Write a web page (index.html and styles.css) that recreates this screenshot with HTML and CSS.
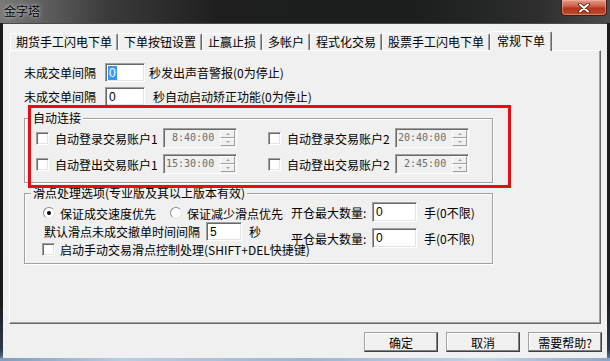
FILE: index.html
```html
<!DOCTYPE html>
<html lang="zh-CN">
<head>
<meta charset="utf-8">
<title>金字塔</title>
<link rel="stylesheet" href="styles.css">
</head>
<body>
<div class="window">
  <div class="titlebar">
    <span class="title">金字塔</span>
    <div class="close">
      <svg width="14" height="10" viewBox="0 0 14 10"><path d="M3 1.5 L11 8.5 M11 1.5 L3 8.5" stroke="#4a1a10" stroke-width="3.6" stroke-linecap="round"/><path d="M3 1.5 L11 8.5 M11 1.5 L3 8.5" stroke="#fff" stroke-width="2" stroke-linecap="round"/></svg>
    </div>
  </div>
  <div class="client">
    <div class="tabs">
      <div class="tab">期货手工闪电下单</div>
      <div class="tab">下单按钮设置</div>
      <div class="tab">止赢止损</div>
      <div class="tab">多帐户</div>
      <div class="tab">程式化交易</div>
      <div class="tab">股票手工闪电下单</div>
      <div class="tab active">常规下单</div>
    </div>
    <div class="panel">
      <div class="row r1">
        <span class="lbl">未成交单间隔</span>
        <span class="edit e1"><span class="sel">0</span></span>
        <span class="after a1">秒发出声音警报(0为停止)</span>
      </div>
      <div class="row r2">
        <span class="lbl">未成交单间隔</span>
        <span class="edit e1"><span class="val">0</span></span>
        <span class="after a2">秒自动启动矫正功能(0为停止)</span>
      </div>
      <fieldset class="group g1">
        <legend>自动连接</legend>
        <div class="conn">
          <div class="item"><span class="cb"></span><span class="clbl">自动登录交易账户1</span><div class="spin"><span class="sv"> 8:40:00</span><div class="sb"><i class="up"></i><i class="dn"></i></div></div></div>
          <div class="item"><span class="cb"></span><span class="clbl">自动登录交易账户2</span><div class="spin"><span class="sv">20:40:00</span><div class="sb"><i class="up"></i><i class="dn"></i></div></div></div>
          <div class="item"><span class="cb"></span><span class="clbl">自动登出交易账户1</span><div class="spin"><span class="sv">15:30:00</span><div class="sb"><i class="up"></i><i class="dn"></i></div></div></div>
          <div class="item"><span class="cb"></span><span class="clbl">自动登出交易账户2</span><div class="spin"><span class="sv"> 2:45:00</span><div class="sb"><i class="up"></i><i class="dn"></i></div></div></div>
        </div>
      </fieldset>
      <fieldset class="group g2">
        <legend>滑点处理选项(专业版及其以上版本有效)</legend>
        <div class="slip">
          <div class="lc">
            <div class="radios">
              <span class="radio on"></span><span class="rl">保证成交速度优先</span>
              <span class="radio r2nd"></span><span class="rl">保证减少滑点优先</span>
            </div>
            <div class="delay">
              <span class="dl">默认滑点未成交撤单时间间隔</span>
              <span class="edit e2"><span class="val">5</span></span>
              <span class="sec">秒</span>
            </div>
            <div class="manual">
              <span class="cb"></span><span class="ml">启动手动交易滑点控制处理(SHIFT+DEL快捷键)</span>
            </div>
          </div>
          <div class="rc">
            <div class="qty"><span class="ql">开仓最大数量:</span><span class="edit e3"><span class="val">0</span></span><span class="qn">手(0不限)</span></div>
            <div class="qty q2"><span class="ql">平仓最大数量:</span><span class="edit e3"><span class="val">0</span></span><span class="qn">手(0不限)</span></div>
          </div>
        </div>
      </fieldset>
      <div class="redmark"></div>
    </div>
    <div class="buttons">
      <div class="btn">确定</div>
      <div class="btn">取消</div>
      <div class="btn">需要帮助?</div>
    </div>
  </div>
  <div class="frame-bottom"></div>
</div>
</body>
</html>
```

FILE: styles.css
```css
* { box-sizing: border-box; }
html, body { margin: 0; padding: 0; }
body {
  width: 610px;
  height: 361px;
  overflow: hidden;
  background: #151515;
  font-family: "Noto Sans CJK SC", "Noto Sans", sans-serif;
  font-size: 12px;
  color: #000;
}
.window {
  width: 610px;
  height: 361px;
  display: flex;
  flex-direction: column;
  background: linear-gradient(#1c1c1c, #1a1a1a 300px, #2c3a4e 350px, #6f8cb0);
}
.titlebar {
  height: 23px;
  flex: none;
  display: flex;
  justify-content: space-between;
  align-items: flex-start;
  background: linear-gradient(90deg, #7a7a7a 0, #606060 40px, #3a3a3a 110px, #1e1e1e 220px, #1b1f1e 420px, #2e2e2e 540px, #4c4c4c 610px);
}
.title {
  margin: 2px 0 0 4px;
  line-height: 17px;
  font-size: 12px;
  color: #000;
  text-shadow: 0 0 5px rgba(230,230,230,.8), 0 0 2px rgba(230,230,230,.6);
}
.close {
  width: 46px;
  height: 16px;
  margin-right: 3px;
  border: 1px solid #3d1a12;
  border-top: none;
  border-radius: 0 0 4px 4px;
  background: linear-gradient(#e29a86, #cf624a 40%, #b3361c 55%, #c04a2c);
  box-shadow: inset 0 0 0 1px rgba(255,200,180,.45);
  display: flex;
  align-items: center;
  justify-content: center;
}
.client {
  flex: none;
  height: 335px;
  margin: 0 3px;
  background: #f0f0f0;
  border-top: 1px solid #4a4a4a;
  padding-top: 7px;
}
.tabs {
  display: flex;
  align-items: flex-end;
  height: 19px;
  margin-left: 7px;
  position: relative;
  z-index: 1;
}
.tab {
  height: 17px;
  padding: 0 5px;
  border: 1px solid;
  border-bottom: none;
  border-color: #fff #696969 transparent #fff;
  border-radius: 2px 2px 0 0;
  box-shadow: inset -1px 0 #a0a0a0;
  line-height: 15px;
  white-space: nowrap;
  background: #f0f0f0;
}
.tab.active {
  height: 20px;
  margin-bottom: -1px;
  padding: 0 6px;
  line-height: 17px;
}
.panel {
  position: relative;
  margin-left: 6px;
  width: 592px;
  height: 274px;
  border: 1px solid;
  border-color: #fff #696969 #696969 #fff;
  box-shadow: inset -1px -1px #a0a0a0;
  padding: 12px 0 0 14px;
}
.row {
  display: flex;
  align-items: center;
  height: 19px;
}
.r2 { margin-top: 5px; }
.lbl { width: 72px; margin-right: 9px; white-space: nowrap; }
.edit {
  display: flex;
  align-items: center;
  background: #fff;
  border: 1px solid;
  border-color: #a0a0a0 #fff #fff #a0a0a0;
  box-shadow: inset 1px 1px #696969, inset -1px -1px #e3e3e3;
  padding-left: 3px;
  font-family: "Liberation Sans", sans-serif;
  font-size: 12px;
}
.e1 { width: 40px; height: 19px; }
.sel {
  background: #3399ff;
  color: #fff;
  padding: 0 1px;
  line-height: 14px;
  margin-left: -1px;
}
.val { line-height: 14px; }
.after { white-space: nowrap; }
.a1 { margin-left: 4px; }
.a2 { margin-left: 8px; }

.group {
  margin: 0;
  padding: 0;
  border: 1px solid #a0a0a0;
  box-shadow: inset 1px 1px #fff, 1px 1px #fff;
  width: 469px;
  min-width: 0;
}
.group legend {
  margin-left: 6px;
  padding: 0 2px;
  height: 14px;
  line-height: 14px;
  background: #f0f0f0;
  white-space: nowrap;
}
.g1 { margin-top: 5px; }
.conn {
  display: grid;
  grid-template-columns: 232px auto;
  row-gap: 6px;
  padding: 3px 0 8px 11px;
}
.item {
  display: flex;
  align-items: center;
  height: 20px;
}
.cb {
  flex: none;
  width: 13px;
  height: 13px;
  background: #fff;
  border: 1px solid;
  border-color: #a0a0a0 #fff #fff #a0a0a0;
  box-shadow: inset 1px 1px #696969, inset -1px -1px #e3e3e3;
}
.item .cb { margin-right: 6px; }
.clbl { width: 108px; white-space: nowrap; }
.spin {
  display: flex;
  width: 74px;
  height: 20px;
  border: 1px solid;
  border-color: #a0a0a0 #fff #fff #a0a0a0;
  box-shadow: inset 1px 1px #696969;
  background: #f0f0f0;
  padding: 1px 1px 1px 2px;
}
.sv {
  flex: 1;
  white-space: pre;
  font-family: "DejaVu Sans Mono", monospace;
  font-size: 10px;
  line-height: 16px;
  color: #6d6d6d;
}
.sb {
  width: 15px;
  display: flex;
  flex-direction: column;
}
.sb i {
  flex: 1;
  display: flex;
  align-items: center;
  justify-content: center;
  border: 1px solid;
  border-color: #fff #a0a0a0 #a0a0a0 #fff;
  background: #f0f0f0;
}
.sb i::after {
  content: "";
  width: 0;
  height: 0;
  border-left: 2px solid transparent;
  border-right: 2px solid transparent;
}
.sb .up::after { border-bottom: 2px solid #a0a0a0; }
.sb .dn::after { border-top: 2px solid #a0a0a0; }

.g2 { margin-top: 3px; }
.slip {
  display: flex;
  padding: 0 0 5px 17px;
}
.lc { width: 249px; }
.radios {
  display: flex;
  align-items: center;
  height: 18px;
  margin-top: 4px;
  white-space: nowrap;
}
.radio {
  flex: none;
  width: 12px;
  height: 12px;
  border-radius: 50%;
  background: #fff;
  border: 1px solid;
  border-color: #8a8a8a #e3e3e3 #e3e3e3 #8a8a8a;
  margin-left: 1px;
  margin-right: 5px;
  display: flex;
  align-items: center;
  justify-content: center;
}
.radio.on::after {
  content: "";
  width: 4px;
  height: 4px;
  border-radius: 50%;
  background: #000;
}
.r2nd { margin-left: 14px; }
.delay {
  display: flex;
  align-items: center;
  height: 19px;
  white-space: nowrap;
}
.dl { margin-left: 2px; }
.e2 { width: 36px; height: 19px; margin-left: 6px; }
.sec { margin-left: 7px; }
.manual {
  display: flex;
  align-items: center;
  height: 17px;
  white-space: nowrap;
}
.manual .cb { margin-right: 5px; }
.rc { padding-top: 2px; }
.qty {
  display: flex;
  align-items: center;
  height: 20px;
  white-space: nowrap;
}
.q2 { margin-top: 6px; }
.ql { width: 81px; }
.e3 { width: 45px; height: 20px; }
.qn { margin-left: 7px; }

.redmark {
  position: absolute;
  left: 18px;
  top: 54px;
  width: 483px;
  height: 83px;
  border: 3px solid #e80c14;
  pointer-events: none;
}

.buttons {
  display: flex;
  justify-content: flex-end;
  gap: 8px;
  margin-top: 8px;
  padding-right: 5px;
}
.btn {
  width: 74px;
  height: 20px;
  display: flex;
  align-items: center;
  justify-content: center;
  border: 1px solid;
  border-color: #a0a0a0 #404040 #404040 #a0a0a0;
  box-shadow: inset -1px -1px #808080, inset 1px 1px #fff;
  background: #f0f0f0;
}
.frame-bottom {
  flex: 1;
  background: linear-gradient(90deg, #7f9dc0, #b9cde4 20%, #9db6d4 50%, #c2d3e8 80%, #8aa6c8);
}
```
